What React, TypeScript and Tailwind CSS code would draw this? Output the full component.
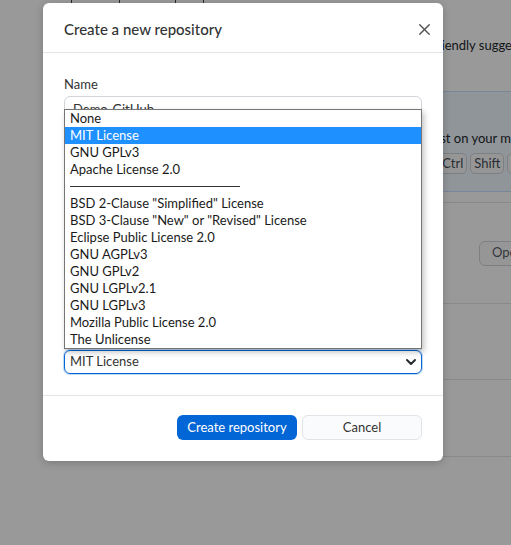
import { X, ChevronDown } from "lucide-react"

const licenses = [
  "None",
  "MIT License",
  "GNU GPLv3",
  "Apache License 2.0",
  "---",
  "BSD 2-Clause \"Simplified\" License",
  "BSD 3-Clause \"New\" or \"Revised\" License",
  "Eclipse Public License 2.0",
  "GNU AGPLv3",
  "GNU GPLv2",
  "GNU LGPLv2.1",
  "GNU LGPLv3",
  "Mozilla Public License 2.0",
  "The Unlicense",
]

function Kbd({ children }: { children: string }) {
  return (
    <span className="rounded-[5px] border border-[#d1d5da] bg-[#fafbfc] px-[3px] text-[13px] leading-[19px] text-[#444d56]">
      {children}
    </span>
  )
}

// "no local changes" screen sitting behind the dialog
function Background() {
  return (
    <div className="flex h-full flex-col bg-white text-[13px] text-[#24292e]">
      {/* toolbar tabs */}
      <div className="flex h-[6px] shrink-0">
        <div className="ml-[71px] w-[49px] border-x border-[#444]" />
        <div className="w-[56px] border-r border-[#444]" />
        <div className="w-[28px] border-r border-[#444]" />
      </div>
      <div className="ml-[150px] w-[600px]">
        <p className="mt-[30px] whitespace-nowrap pl-[196px] leading-[18px] text-[#24292e]">
          Here are some friendly suggestions for what to do next.
        </p>
        {/* highlighted suggestion */}
        <div className="mt-[37px] flex h-[101px] flex-col justify-end gap-[6px] rounded-md border border-[#c8e1ff] bg-[#f1f8ff] pb-[17px]">
          <div className="whitespace-nowrap pl-[72px] leading-[18px]">
            This repository is currently available just on your machine.
          </div>
          <div className="flex items-center gap-[3px] whitespace-nowrap pl-[94px] text-[#586069]">
            <span className="mr-[2px]">Always available in the toolbar or</span>
            <Kbd>Ctrl</Kbd>
            <Kbd>Shift</Kbd>
            <Kbd>P</Kbd>
          </div>
        </div>
        <div className="mt-[10px] flex h-[101px] items-center border-t border-[#e1e4e8] pl-[100px]">
          <span className="w-[229px] whitespace-nowrap">View the files of your repository</span>
          <button className="h-[25px] rounded-md border border-[#d1d5da] bg-[#fafbfc] px-3 text-[13px] text-[#586069]">
            Open in Explorer
          </button>
        </div>
        <div className="h-[76px] border-t border-[#e1e4e8]" />
        <div className="h-[77px] border-t border-[#e1e4e8]" />
        <div className="border-t border-[#e1e4e8]" />
      </div>
    </div>
  )
}

function Field({ label }: { label: string }) {
  return (
    <div className="flex flex-col gap-[6px]">
      <span className="text-[13px] leading-[18px] text-[#24292e]">{label}</span>
      <div className="h-[26px] rounded-md border border-[#d1d5da]" />
    </div>
  )
}

function LicenseList() {
  return (
    <div className="absolute left-0 right-0 top-[34px] border border-[#767676] bg-white shadow-[2px_3px_6px_rgba(0,0,0,0.25)]">
      {licenses.map((name) =>
        name === "---" ? (
          <div key={name} className="flex h-[17px] items-center pl-[5px]">
            <div className="w-[170px] border-t border-[#333]" />
          </div>
        ) : (
          <div
            key={name}
            className={
              name === "MIT License"
                ? "h-[17px] bg-[#1e90ff] pl-[5px] text-[13px] leading-[17px] text-white"
                : "h-[17px] pl-[5px] text-[13px] leading-[17px] text-[#1a1a1a]"
            }
          >
            {name}
          </div>
        )
      )}
    </div>
  )
}

export default function App() {
  return (
    <div className="relative h-[545px] w-[511px] overflow-hidden font-['Lato',sans-serif]">
      <Background />
      <div className="absolute inset-0 flex items-start bg-black/40 pl-[43px] pt-[3px]">
        <div className="w-[400px] rounded-md bg-white shadow-[0_2px_8px_rgba(0,0,0,0.2)]">
          {/* header */}
          <div className="flex h-[50px] items-center justify-between border-b border-[#e1e4e8] pl-[21px] pr-[9px] pt-[3px]">
            <h1 className="text-[15px] font-medium text-[#333]">Create a new repository</h1>
            <X size={19} strokeWidth={1.8} className="text-[#555]" />
          </div>

          {/* form */}
          <div className="px-[21px] pb-[21px] pt-[22px]">
            <div className="relative">
              <div className="flex flex-col gap-[3px]">
                <span className="text-[13px] leading-[18px] text-[#333]">Name</span>
                <div className="flex h-[28px] items-center rounded-md border border-[#d1d5da] px-[8px] text-[13px] text-[#333]">
                  Demo-GitHub
                </div>
              </div>
              <div className="mt-[12px] flex h-[214px] flex-col gap-[12px] overflow-hidden">
                <Field label="Description" />
                <Field label="Local path" />
                <Field label="Git ignore" />
                <Field label="License" />
              </div>
              <LicenseList />
            </div>
            <div className="flex h-[24px] items-center justify-between rounded-md border border-[#0366d6] pl-[5px] pr-[2px] text-[13px] text-[#333] shadow-[0_0_0_1px_rgba(3,102,214,0.25)]">
              <span>MIT License</span>
              <ChevronDown size={16} strokeWidth={3} className="text-[#24292e]" />
            </div>
          </div>

          {/* footer */}
          <div className="flex justify-end gap-[5px] border-t border-[#e1e4e8] px-[21px] pb-[21px] pt-[19px]">
            <button className="h-[25px] w-[120px] rounded-md bg-[#0366d6] text-[13px] text-white">
              Create repository
            </button>
            <button className="h-[25px] w-[120px] rounded-md border border-[#e1e4e8] bg-[#fafbfc] text-[13px] text-[#333]">
              Cancel
            </button>
          </div>
        </div>
      </div>
    </div>
  )
}
